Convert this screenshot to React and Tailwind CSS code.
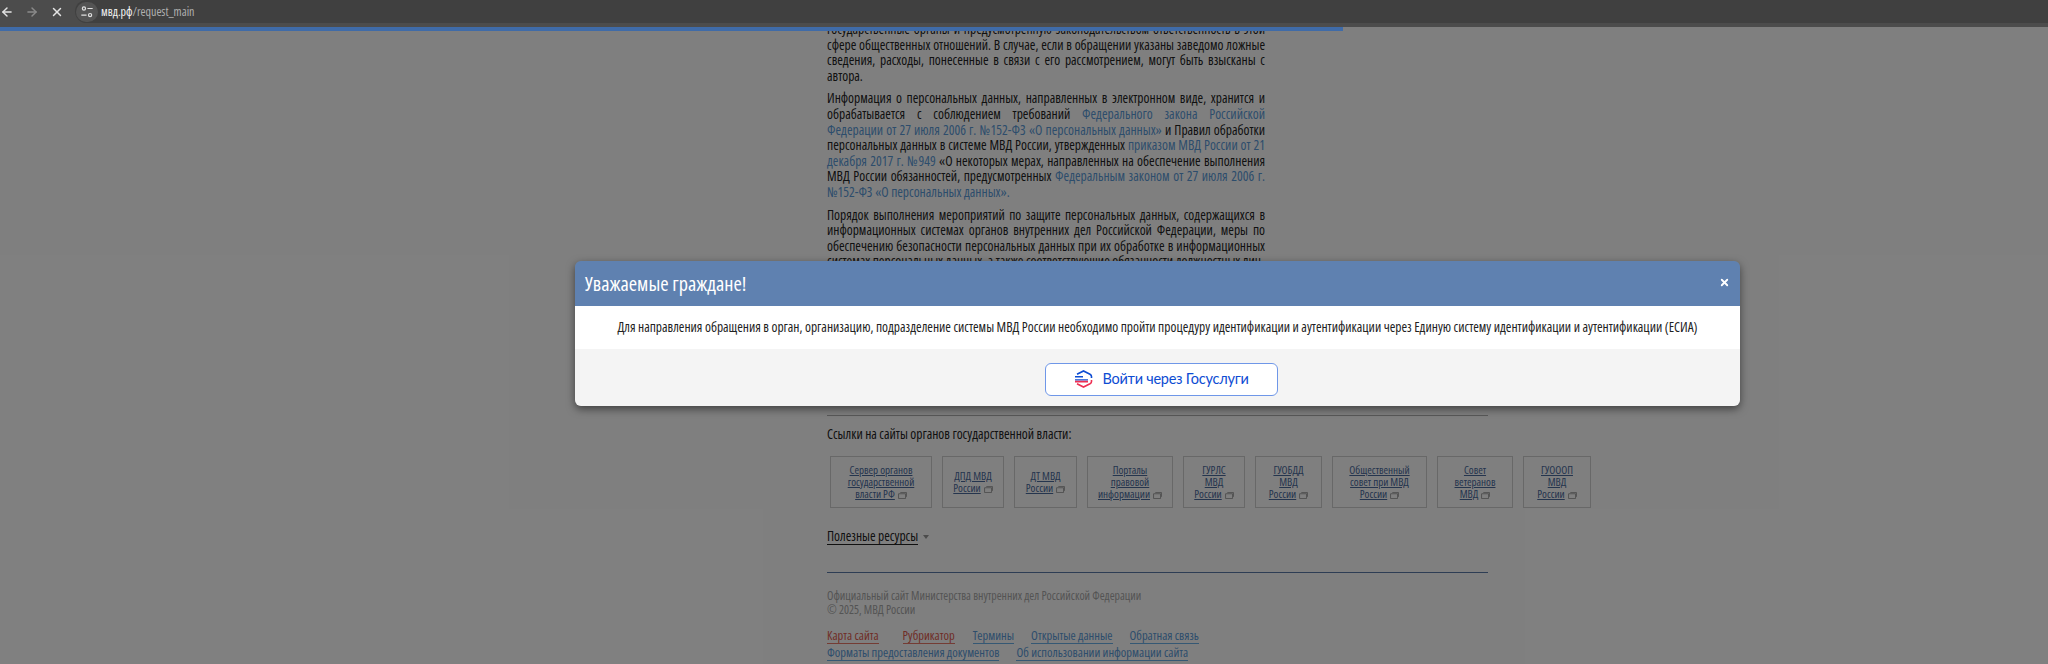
import { ArrowLeft, ArrowRight, X } from "lucide-react";

const serviceLinks = [
  { w: "w-[102px]", lines: ["Сервер органов", "государственной", "власти РФ"] },
  { w: "w-[62px]", lines: ["ДПД МВД", "России"] },
  { w: "w-[63px]", lines: ["ДТ МВД", "России"] },
  { w: "w-[86px]", lines: ["Порталы", "правовой", "информации"] },
  { w: "w-[62px]", lines: ["ГУРЛС", "МВД", "России"] },
  { w: "w-[67px]", lines: ["ГУОБДД", "МВД", "России"] },
  { w: "w-[95px]", lines: ["Общественный", "совет при МВД", "России"] },
  { w: "w-[76px]", lines: ["Совет", "ветеранов", "МВД"] },
  { w: "w-[68px]", lines: ["ГУОООП", "МВД", "России"] },
];

function ExternalIcon() {
  return (
    <svg viewBox="0 0 10 8" className="ml-[3px] inline-block h-[7px] w-[9px] align-[-1px] text-[#999999]" fill="none" stroke="currentColor" strokeWidth="1">
      <path d="M2.5 .5h7v5" />
      <path d="M.5 2h8v5.5h-8z" />
    </svg>
  );
}

function TuneIcon() {
  return (
    <svg viewBox="0 0 16 16" className="h-[14px] w-[14px] text-[#e0e0e0]" fill="none" stroke="currentColor" strokeWidth="1.4">
      <circle cx="4.5" cy="4" r="1.8" />
      <path d="M8.5 4h6M1.5 11.5h6" />
      <circle cx="11.5" cy="11.5" r="1.8" />
    </svg>
  );
}

function GosuslugiLogo() {
  return (
    <svg viewBox="0 0 19 18" className="h-[18px] w-[19px]">
      <path d="M3 4.2 9.5 1l6.5 3.2q1.5.8 1.5 2.3v1.5" fill="none" stroke="#0d4cd3" strokeWidth="1.6" />
      <path d="M3 13.8 9.5 17l6.5-3.2q1.5-.8 1.5-2.3V10" fill="none" stroke="#ee2f53" strokeWidth="1.6" />
      <path d="M1 6.8h8" stroke="#0d4cd3" strokeWidth="1.6" />
      <path d="M1 9.8h13" stroke="#0d4cd3" strokeWidth="1.2" />
      <path d="M1 11.6h13" stroke="#ee2f53" strokeWidth="1.6" />
    </svg>
  );
}

function FooterLink({ red, className = "", children }) {
  return (
    <a className={`border-b leading-[14px] ${red ? "border-[#e87868] text-[#e05a4c]" : "border-[#6ab0e8] text-[#5a9ad8]"} ${className}`}>
      {children}
    </a>
  );
}

function BrowserBar() {
  return (
    <div className="h-[27px] bg-[#4c4c4c]">
      <div className="flex h-[23px] items-center">
        <ArrowLeft className="h-[14px] w-[14px] text-[#e3e3e3]" strokeWidth={2.5} />
        <ArrowRight className="ml-[11px] h-[14px] w-[14px] text-[#8a8a8a]" strokeWidth={2.5} />
        <X className="ml-[11px] h-[14px] w-[14px] text-[#e3e3e3]" strokeWidth={2.5} />
        <div className="ml-[11px] flex h-[23px] flex-1 items-center rounded-l-full bg-[#404040] text-[12px]">
          <span className="ml-[1px] flex h-[20px] w-[22px] items-center justify-center rounded-full bg-[#545454]">
            <TuneIcon />
          </span>
          <span className="ml-[3px] text-[#f2f2f2]">мвд.рф</span>
          <span className="text-[#b0b0b0]">/request_main</span>
        </div>
      </div>
    </div>
  );
}

export default function App() {
  return (
    <div className="relative h-[664px] overflow-hidden bg-white font-['Open_Sans',sans-serif] text-[#222222] [font-stretch:75%]">
      <div className="relative h-[664px] pt-[22px]">
        <div className="ml-[827px] w-[438px] text-justify text-[13.5px] leading-[15.6px] [&>p]:mb-[7px]">
          <p>
            государственные органы и предусмотренную законодательством ответственность в этой
            сфере общественных отношений. В случае, если в обращении указаны заведомо ложные
            сведения, расходы, понесенные в связи с его рассмотрением, могут быть взысканы с
            автора.
          </p>
          <p>
            Информация о персональных данных, направленных в электронном виде, хранится и
            обрабатывается с соблюдением требований{" "}
            <a className="text-[#5a9ad8]">Федерального закона Российской Федерации от 27 июля 2006 г. №152-ФЗ «О персональных данных»</a>{" "}
            и Правил обработки персональных данных в системе МВД России, утвержденных{" "}
            <a className="text-[#5a9ad8]">приказом МВД России от 21 декабря 2017 г. №949</a>{" "}
            «О некоторых мерах, направленных на обеспечение выполнения МВД России обязанностей, предусмотренных{" "}
            <a className="text-[#5a9ad8]">Федеральным законом от 27 июля 2006 г. №152-ФЗ «О персональных данных».</a>
          </p>
          <p>
            Порядок выполнения мероприятий по защите персональных данных, содержащихся в
            информационных системах органов внутренних дел Российской Федерации, меры по
            обеспечению безопасности персональных данных при их обработке в информационных
            системах персональных данных, а также соответствующие обязанности должностных лиц
          </p>
        </div>

        <div className="absolute left-[827px] top-[415px] w-[661px] border-t border-[#b0b0b0] pt-[10px] text-[13.5px] leading-[16px]">
          <p>Ссылки на сайты органов государственной власти:</p>
          <div className="ml-[3px] mt-[14px] flex w-[770px] gap-[10px]">
            {serviceLinks.map((link) => (
              <div key={link.lines[0]} className={`${link.w} flex h-[52px] shrink-0 flex-col items-center justify-center border border-[#d0d0d0] text-center text-[11px] leading-[11.7px] text-[#4a6a9c]`}>
                {link.lines.map((line, i) => (
                  <span key={line} className="whitespace-nowrap">
                    <span className="underline">{line}</span>
                    {i === link.lines.length - 1 && <ExternalIcon />}
                  </span>
                ))}
              </div>
            ))}
          </div>
          <div className="mt-[21px] flex items-center">
            <span className="border-b border-[#222222] leading-[15px]">Полезные ресурсы</span>
            <span className="ml-[5px] h-0 w-0 border-x-[3.5px] border-t-[4px] border-x-transparent border-t-[#999999]" />
          </div>
          <div className="mt-[27px] border-t border-[#5a7ba8] pt-[15px] text-[11.8px] leading-[14px] text-[#a8a8a8]">
            <p>Официальный сайт Министерства внутренних дел Российской Федерации</p>
            <p>© 2025, МВД России</p>
          </div>
          <div className="mt-[13px] text-[12.5px] leading-[16px]">
            <div className="flex">
              <FooterLink red>Карта сайта</FooterLink>
              <FooterLink red className="ml-[24px]">Рубрикатор</FooterLink>
              <FooterLink className="ml-[18px]">Термины</FooterLink>
              <FooterLink className="ml-[17px]">Открытые данные</FooterLink>
              <FooterLink className="ml-[17px]">Обратная связь</FooterLink>
            </div>
            <div className="mt-[2px] flex">
              <FooterLink>Форматы предоставления документов</FooterLink>
              <FooterLink className="ml-[17px]">Об использовании информации сайта</FooterLink>
            </div>
          </div>
        </div>
      </div>

      {/* backdrop, then modal on top of it */}
      <div className="absolute inset-0 bg-black/50" />
      <div className="absolute left-0 right-0 top-0">
        <BrowserBar />
        <div className="h-[4px] w-[1343px] bg-[#3f6ba8]" />
      </div>

      <div className="absolute left-[575px] top-[261px] w-[1165px] overflow-hidden rounded-[6px] shadow-[0_3px_9px_rgba(0,0,0,0.5)]">
        <div className="relative flex h-[45px] items-center bg-[#5f81b0] pl-[10px] text-[20.2px] text-white">
          Уважаемые граждане!
          <X className="absolute right-[10px] top-[16px] h-[11px] w-[11px]" strokeWidth={4} />
        </div>
        <div className="flex h-[43px] items-center justify-center whitespace-nowrap bg-white text-[13.5px] text-[#222222]">
          Для направления обращения в орган, организацию, подразделение системы МВД России необходимо пройти процедуру идентификации и аутентификации через Единую систему идентификации и аутентификации (ЕСИА)
        </div>
        <div className="flex h-[57px] items-center justify-center bg-[#f4f4f4]">
          <button type="button" className="ml-[8px] mt-[3px] flex h-[33px] w-[233px] items-center justify-center gap-[9px] rounded-[6px] border border-[#6f97e8] bg-white font-['Lato',sans-serif] text-[14.5px] tracking-[-0.25px] text-[#0d4cd3]">
            <GosuslugiLogo />
            Войти через Госуслуги
          </button>
        </div>
      </div>
    </div>
  );
}
